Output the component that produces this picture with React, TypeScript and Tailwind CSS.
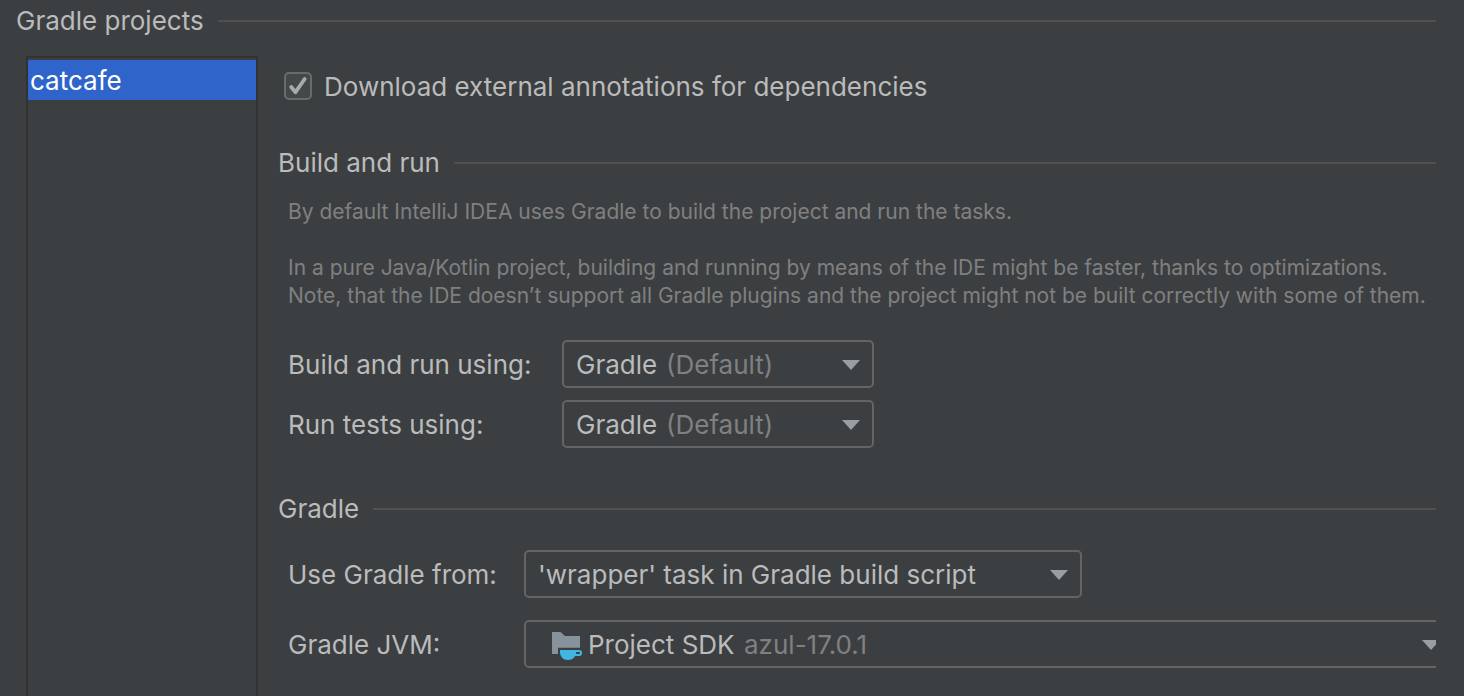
import type { ReactNode } from "react";

function SectionTitle({ children }: { children: ReactNode }) {
  return (
    <div className="flex h-[42px] items-center gap-3.5">
      <h2 className="whitespace-nowrap">{children}</h2>
      <div className="h-0.5 flex-1 bg-[#515151]" />
    </div>
  );
}

function Arrow() {
  return (
    <svg viewBox="0 0 18 10" className="h-2.5 w-[18px] shrink-0" aria-hidden="true">
      <path d="M0 0H18L9 10Z" fill="#9a9da1" />
    </svg>
  );
}

function SdkIcon() {
  return (
    <svg viewBox="0 1 32 32" className="size-8 shrink-0" aria-hidden="true">
      <path d="M2 4H10.5L15 8H30V19.7H8V26H2Z" fill="#87939a" />
      <path
        fillRule="evenodd"
        clipRule="evenodd"
        d="M10 22H29.5C31 22 32 23 32 24.4V25.5C32 27 31 28 29.5 28H25.2C23.6 30.6 21.3 32 18 32C13.3 32 10 28.5 10 24ZM26.3 24L26 26H29.2C29.8 26 30 25.7 30 25.3V24.7C30 24.2 29.8 24 29.2 24Z"
        fill="#40b6e0"
      />
    </svg>
  );
}

const selectClass =
  "col-start-1 row-start-1 h-12 w-full appearance-none rounded-[5px] border-2 border-[#646464] bg-transparent pt-0.5 text-[#bbbbbb] outline-none";

const overlayClass =
  "pointer-events-none col-start-1 row-start-1 flex h-12 items-center pt-0.5 pr-3.5";

function RunnerSelect({ id, label }: { id: string; label: string }) {
  return (
    <>
      <label htmlFor={id} className="pt-0.5">
        {label}
      </label>
      <div className="grid w-[312px]">
        <select id={id} className={`${selectClass} pl-3`}>
          <option>Gradle</option>
          <option>IntelliJ IDEA</option>
        </select>
        <div className={`${overlayClass} justify-between pl-[104px]`}>
          <span className="text-[#808080]">(Default)</span>
          <Arrow />
        </div>
      </div>
    </>
  );
}

export default function App() {
  return (
    <main className="flex min-h-screen flex-col bg-[#3c3f41] pr-7 pl-4 font-['Inter',sans-serif] text-[26px] leading-8 text-[#bbbbbb]">
      <SectionTitle>Gradle projects</SectionTitle>
      <div className="flex flex-1">
        <ul className="mt-3.5 ml-2.5 w-[232px] shrink-0 border-2 border-b-0 border-[#323232] pt-0.5">
          <li>
            <button className="flex h-10 w-full items-center bg-[#2f65ca] pt-0.5 pl-0.5 text-left text-white">
              catcafe
            </button>
          </li>
        </ul>
        <div className="ml-5 min-w-0 flex-1 overflow-hidden pt-6">
          <label className="flex h-10 items-center gap-3 pl-1.5">
            <span className="grid size-7 place-items-center">
              <input
                type="checkbox"
                defaultChecked
                className="peer col-start-1 row-start-1 size-7 appearance-none rounded-[5px] border-2 border-[#6b6b6b] bg-[#43494a]"
              />
              <svg
                viewBox="0 0 28 28"
                className="pointer-events-none invisible col-start-1 row-start-1 size-7 peer-checked:visible"
                aria-hidden="true"
              >
                <path
                  d="M7.2 15L11.5 20.2L20.7 7"
                  fill="none"
                  stroke="#a9a9a9"
                  strokeWidth="3.8"
                  strokeLinecap="round"
                  strokeLinejoin="round"
                />
              </svg>
            </span>
            <span className="pt-0.5">Download external annotations for dependencies</span>
          </label>

          <section className="mt-9">
            <SectionTitle>Build and run</SectionTitle>
            <div className="mt-3.5 flex flex-col gap-7 pl-2.5 text-[21px] leading-7 whitespace-nowrap text-[#808080]">
              <p>By default IntelliJ IDEA uses Gradle to build the project and run the tasks.</p>
              <p>
                In a pure Java/Kotlin project, building and running by means of the IDE might be faster, thanks to
                optimizations.
                <br />
                Note, that the IDE doesn’t support all Gradle plugins and the project might not be built correctly with
                some of them.
              </p>
            </div>
            <div className="mt-[30px] grid grid-cols-[274px_auto] items-center justify-start gap-y-3 pl-2.5">
              <RunnerSelect id="build-runner" label="Build and run using:" />
              <RunnerSelect id="test-runner" label="Run tests using:" />
            </div>
          </section>

          <section className="mt-10">
            <SectionTitle>Gradle</SectionTitle>
            <div className="mt-5 grid grid-cols-[236px_1fr] items-center gap-y-[22px] pb-7 pl-2.5">
              <label htmlFor="gradle-source" className="pt-0.5">
                Use Gradle from:
              </label>
              <div className="grid w-[558px]">
                <select id="gradle-source" className={`${selectClass} pl-3`}>
                  <option>'wrapper' task in Gradle build script</option>
                  <option>Specified location</option>
                </select>
                <div className={`${overlayClass} justify-end`}>
                  <Arrow />
                </div>
              </div>
              <label htmlFor="gradle-jvm" className="pt-0.5">
                Gradle JVM:
              </label>
              <div className="-mr-[18px] grid">
                <select id="gradle-jvm" className={`${selectClass} pl-[62px]`}>
                  <option>Project SDK</option>
                </select>
                <div className={`${overlayClass} justify-between pl-[26px]`}>
                  <SdkIcon />
                  <span className="flex-1 pl-[162px] text-[#808080]">azul-17.0.1</span>
                  <Arrow />
                </div>
              </div>
            </div>
          </section>
        </div>
      </div>
    </main>
  );
}
